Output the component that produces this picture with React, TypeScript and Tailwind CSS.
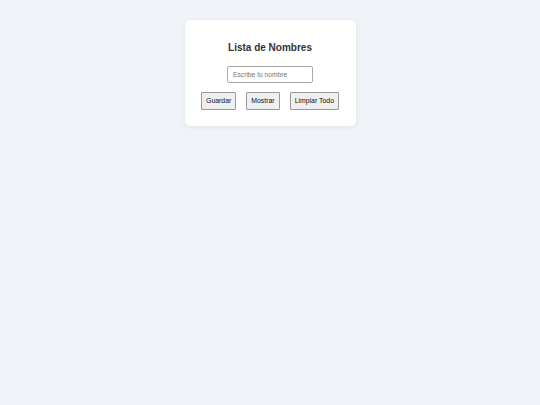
export default function App() {
  const buttons = ["Guardar", "Mostrar", "Limpiar Todo"];
  return (
    <div
      className="min-h-screen bg-[#f0f4f8] flex justify-center pt-[20px]"
      style={{ fontFamily: '"Liberation Sans", Arial, sans-serif' }}
    >
      <div className="w-[171px] h-[106px] bg-white rounded-[5px] shadow-[0_1px_4px_rgba(0,0,0,0.08)] flex flex-col items-center pt-[22px]">
        <h2 className="text-[10px] leading-[12px] font-bold text-[#333]">Lista de Nombres</h2>
        <input
          type="text"
          placeholder="Escribe tu nombre"
          className="mt-[12px] w-[86px] h-[17px] px-[5px] text-[6.7px] border border-[#a9a9a9] rounded-[2px] bg-white placeholder:text-[#757575] outline-none"
        />
        <div className="mt-[9px] flex gap-[10px]">
          {buttons.map((b) => (
            <button
              key={b}
              className="h-[18px] px-[4px] text-[6.9px] leading-[8px] text-[#111] bg-[#efefef] border border-[#9a9a9a] rounded-[1px]"
            >
              {b}
            </button>
          ))}
        </div>
      </div>
    </div>
  );
}
